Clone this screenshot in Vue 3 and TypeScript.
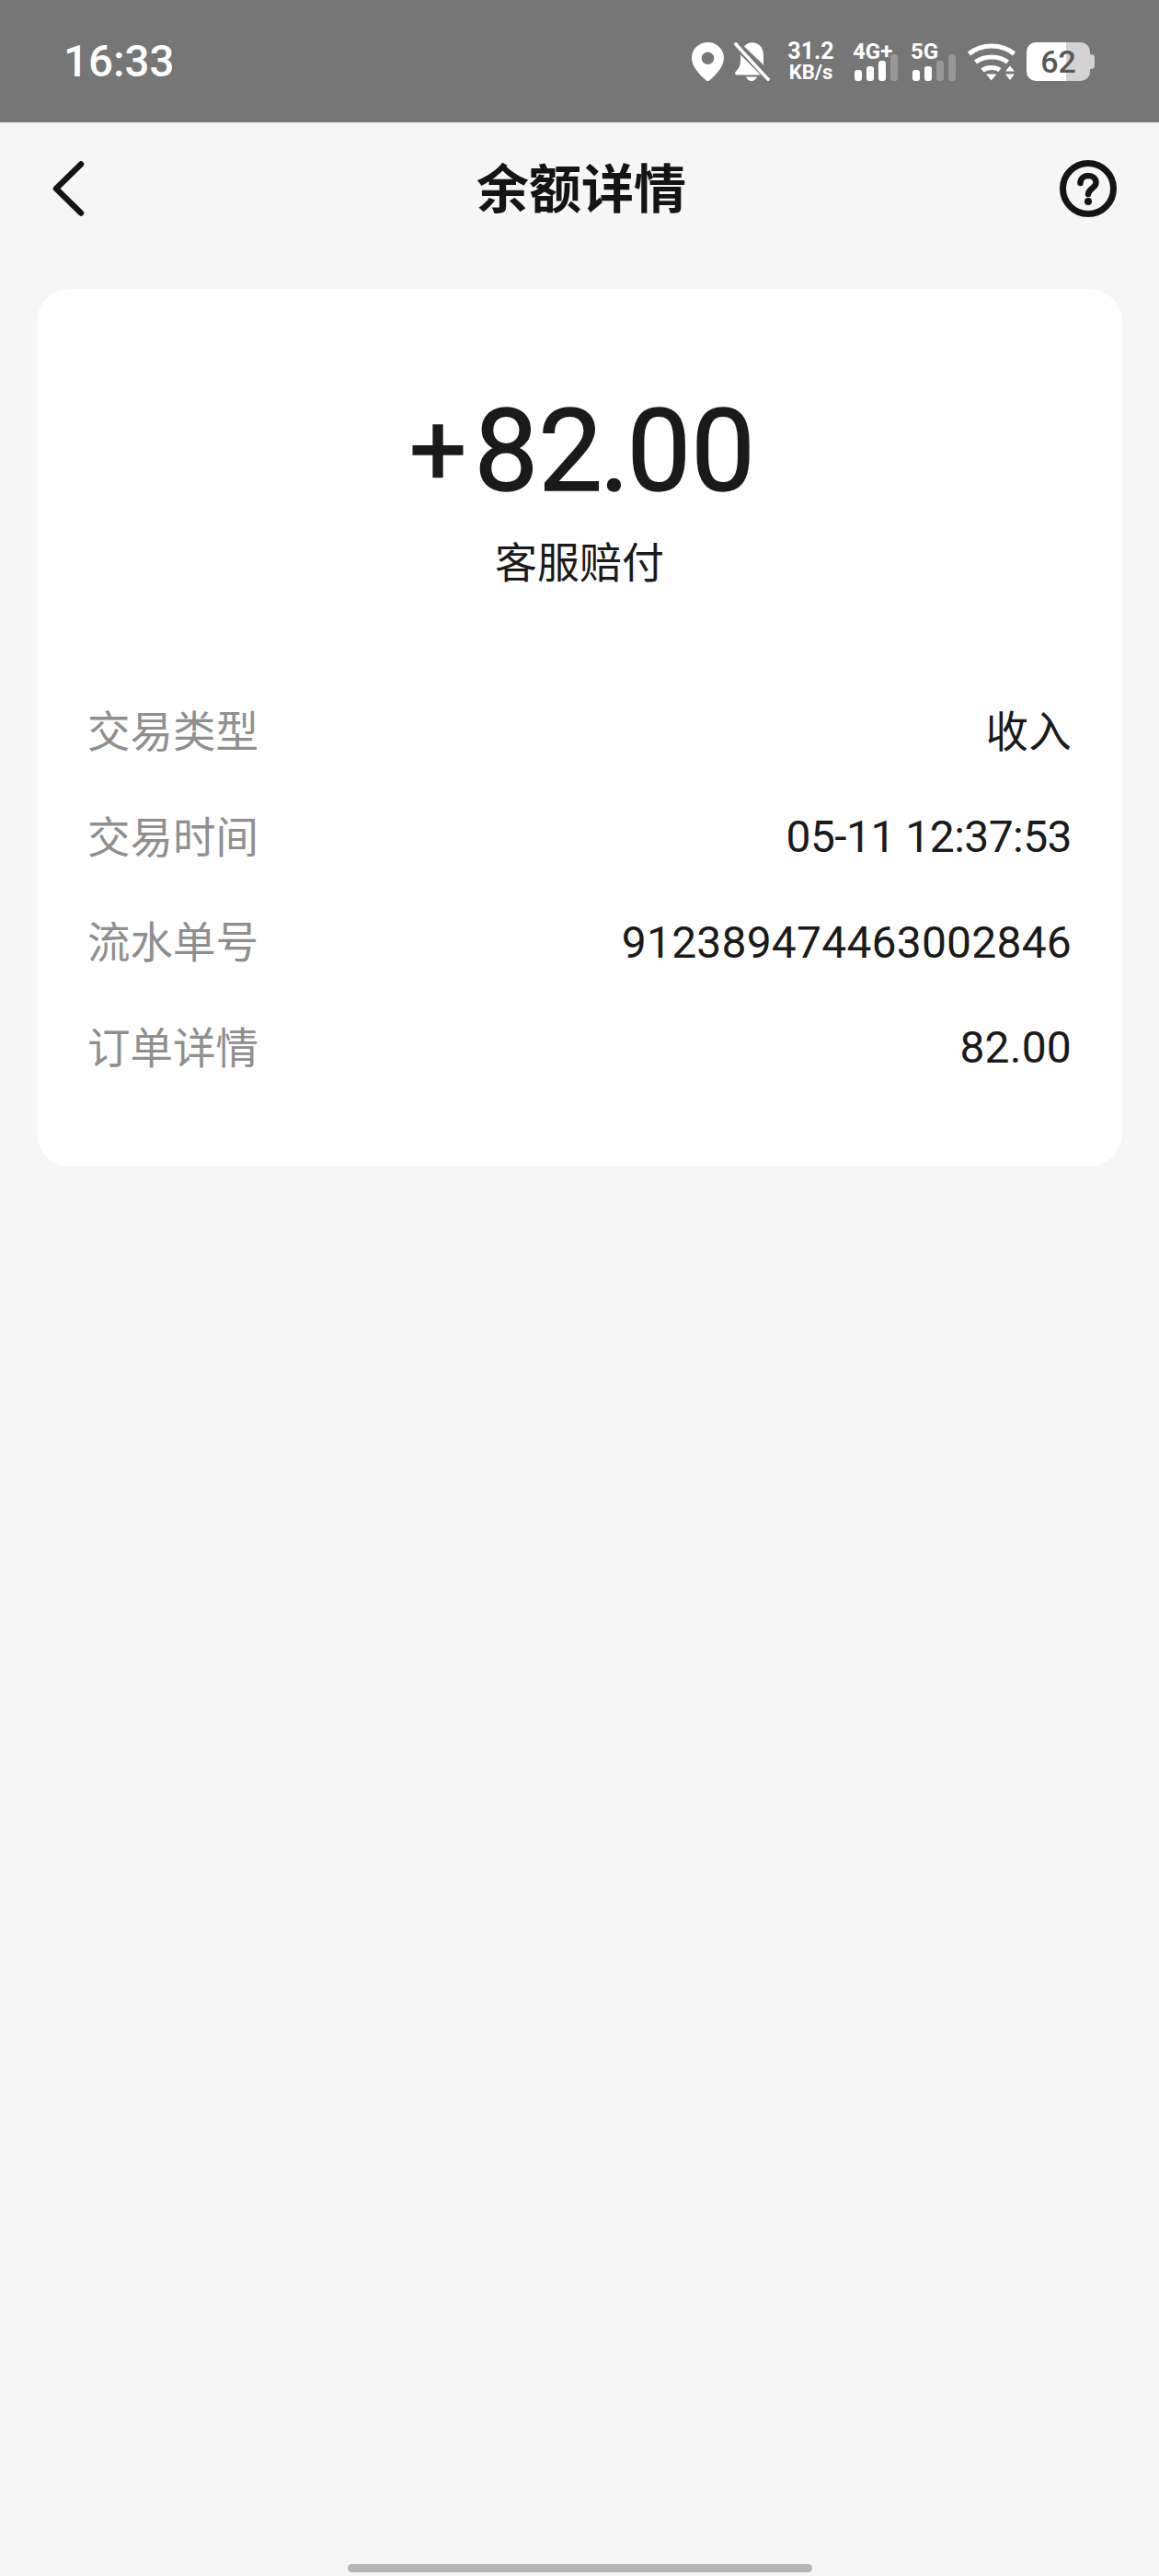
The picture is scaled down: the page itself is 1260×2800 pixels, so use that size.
<template>
  <div class="page">
    <!-- 状态栏 -->
    <header class="status">
      <span class="status__time">16:33</span>
      <div class="status__icons">
        <svg class="ic-pin" width="35" height="42" viewBox="0 0 35 42">
          <path fill="#fff" fill-rule="evenodd" d="M17.5 0C7.8 0 0 7.6 0 17c0 9.6 9 18.600 15.400 24.200a3.200 3.200 0 0 0 4.200 0C26 35.600 35 26.600 35 17 35 7.600 27.200 0 17.500 0zm0 10.500a6.800 6.800 0 1 1 0 13.600 6.800 6.800 0 0 1 0-13.600z" />
        </svg>
        <svg class="ic-bell" width="39" height="42" viewBox="0 0 39 42">
          <path fill="#fff" d="M7 13.500 29 35.500H3c-1.700 0-2.600-2-1.500-3.200C5 28.500 7 26 7 19.500zM11 4.500C13 2 16 .300 19.500.300 27 .300 32 6 32 14v7.500c0 1.300.200 2.400.500 3.400z" />
          <path fill="#fff" d="M13 37.500h12c-.8 2.700-3.200 4.500-6 4.500s-5.200-1.800-6-4.500z" />
          <path stroke="#fff" stroke-width="4" stroke-linecap="round" fill="none" d="M2 2 37 40" />
          <path stroke="#767676" stroke-width="2.500" fill="none" d="M5.500 1.500 38.500 37.500" />
        </svg>
        <div class="speed">
          <span>31.2</span>
          <span class="speed__unit">KB/s</span>
        </div>
        <div v-for="net in networks" :key="net.label" class="signal" :class="'signal--' + net.cls">
          <span class="signal__label">{{ net.label }}</span>
          <div class="signal__bars">
            <i v-for="(h, i) in barHeights" :key="i" :class="{ off: i >= net.active }" :style="{ height: h + 'px' }" />
          </div>
        </div>
        <svg class="ic-wifi" width="52" height="42" viewBox="0 0 52 42">
          <g fill="none" stroke="#fff" stroke-width="5">
            <path d="M1.500 12.500C15 1 37 1 50.500 12.500" />
            <path d="M8.500 21.500C18 14 34 14 43.500 21.500" />
            <path d="M16 30.500C21 26.500 30 26.500 35 30" />
          </g>
          <path fill="#fff" d="M20 34.500h11.500L25.700 41.500zM41 31.500h10L46 25.500zM41 34.500h10L46 41z" />
        </svg>
        <div class="battery">
          <div class="battery__body">62</div>
          <div class="battery__nub" />
        </div>
      </div>
    </header>

    <!-- 导航栏 -->
    <nav class="nav">
      <svg class="nav__back" width="36" height="60" viewBox="0 0 36 60">
        <path d="M31 3.500 4 30l27 26.500" fill="none" stroke="#141414" stroke-width="6.500" stroke-linecap="round" stroke-linejoin="round" />
      </svg>
      <h1 class="nav__title">余额详情</h1>
      <svg class="nav__help" width="62" height="62" viewBox="0 0 62 62">
        <circle cx="31" cy="31" r="27.500" fill="none" stroke="#141414" stroke-width="7" />
        <path d="M22.500 25c0-5 3.800-8 8.500-8s8.500 3 8.500 7.500c0 6-8 6-8.500 12.500" fill="none" stroke="#141414" stroke-width="6.500" stroke-linecap="round" />
        <circle cx="31" cy="45" r="4" fill="#141414" />
      </svg>
    </nav>

    <!-- 详情卡片 -->
    <section class="card">
      <div class="card__amount"><span class="card__plus">+</span>82<span class="card__dot">.</span>00</div>
      <div class="card__reason">客服赔付</div>
      <div class="card__list">
        <div v-for="row in rows" :key="row.label" class="row">
          <span class="row__label">{{ row.label }}</span>
          <span class="row__value" :class="row.cls">{{ row.value }}</span>
        </div>
      </div>
    </section>

    <div class="home-bar" />
  </div>
</template>

<script setup lang="ts">
interface DetailRow {
  label: string;
  value: string;
  cls?: string;
}

const rows: DetailRow[] = [
  { label: '交易类型', value: '收入', cls: 'row__value--cjk' },
  { label: '交易时间', value: '05-11 12:37:53', cls: 'row__value--time' },
  { label: '流水单号', value: '912389474463002846' },
  { label: '订单详情', value: '82.00' },
];

const barHeights = [12, 16, 22, 29];

const networks = [
  { label: '4G+', active: 3, cls: 'lte' },
  { label: '5G', active: 2, cls: 'nr' },
];
</script>

<style>
html,
body {
  margin: 0;
  background: #f6f6f6;
}
</style>

<style scoped>
.page {
  height: 2800px;
  display: flex;
  flex-direction: column;
  background: #f6f6f6;
  color: #1a1a1a;
  font-family: Roboto, "Noto Sans CJK SC", sans-serif;
  overflow: hidden;
}

.status {
  height: 133px;
  flex: none;
  box-sizing: border-box;
  padding: 0 70px 0 69px;
  background: #767676;
  display: flex;
  align-items: center;
  justify-content: space-between;
  color: #fff;
}

.status__time {
  font-size: 47.5px;
  font-weight: 500;
  line-height: 1;
  position: relative;
  top: 1px;
}

.status__icons {
  display: flex;
  align-items: flex-start;
  height: 42px;
  margin-top: 1px;
}

.ic-bell {
  margin-left: 11px;
}

.speed {
  margin-left: 20px;
  width: 49px;
  height: 42px;
  display: flex;
  flex-direction: column;
  justify-content: space-between;
  align-items: center;
  font-size: 25px;
  font-weight: 700;
  line-height: 20px;
}

.speed__unit {
  font-size: 22px;
  font-weight: 700;
  line-height: 18px;
}

.signal {
  display: grid;
  width: 47px;
  height: 42px;
  margin-left: 23px;
}

.signal--nr {
  margin-left: 16px;
}

.signal__label,
.signal__bars {
  grid-area: 1 / 1;
}

.signal__label {
  margin-left: -2px;
  font-size: 24px;
  font-weight: 700;
  line-height: 20px;
  z-index: 1;
}

.signal__bars {
  display: flex;
  align-items: flex-end;
  gap: 5px;
}

.signal__bars i {
  width: 8px;
  border-radius: 3px;
  background: #fff;
}

.signal__bars i.off {
  background: rgba(255, 255, 255, 0.25);
}

.ic-wifi {
  margin-left: 13px;
}

.battery {
  display: flex;
  align-items: center;
  height: 42px;
  margin-left: 12px;
}

.battery__body {
  width: 69px;
  height: 42px;
  border-radius: 10px;
  background: linear-gradient(90deg, #fff 0, #fff 43px, #d3d3d3 43px);
  color: #575757;
  font-size: 34px;
  font-weight: 500;
  line-height: 42px;
  text-align: center;
}

.battery__nub {
  width: 5px;
  height: 16px;
  border-radius: 0 4px 4px 0;
  background: #d3d3d3;
}

.nav {
  height: 144px;
  flex: none;
  box-sizing: border-box;
  padding: 0 46px;
  display: grid;
  grid-template-columns: 1fr auto 1fr;
  align-items: center;
}

.nav__back {
  margin-left: 11px;
}

.nav__help {
  justify-self: end;
}

.nav__title {
  margin: 2px 0 0 4px;
  font-size: 57px;
  font-weight: 700;
  line-height: 1;
  color: #141414;
}

.card {
  margin: 37px 40px 0;
  box-sizing: border-box;
  height: 954px;
  padding: 104px 56px 0;
  background: #fff;
  border-radius: 36px;
}

.card__amount {
  margin: 3px 0 0 6px;
  font-size: 124px;
  font-weight: 400;
  line-height: 137px;
  text-align: center;
  -webkit-text-stroke: 1.4px #1a1a1a;
}

.card__plus {
  margin-right: 8px;
  font-size: 110px;
  vertical-align: 6px;
}

.card__dot {
  margin: 0 -3px;
}

.card__reason {
  margin-top: 23px;
  font-size: 46px;
  line-height: 60px;
  text-align: center;
}

.card__list {
  margin-top: 95px;
}

.row {
  height: 114.7px;
  display: flex;
  align-items: center;
  justify-content: space-between;
}

.row__label {
  margin: 0 0 6px -1px;
  font-size: 46.5px;
  color: #8f8f8f;
}

.row__value {
  margin-top: 1px;
  margin-right: -1px;
  font-size: 48px;
  font-weight: 400;
  letter-spacing: 0.2px;
  color: #1a1a1a;
}

.row__value--cjk {
  margin-top: 0;
  margin-bottom: 6px;
  font-size: 46.5px;
}

.row__value--time {
  letter-spacing: -0.55px;
}

.home-bar {
  width: 505px;
  height: 9px;
  margin: auto auto 4px;
  border-radius: 5px;
  background: #b6b6b6;
}
</style>
